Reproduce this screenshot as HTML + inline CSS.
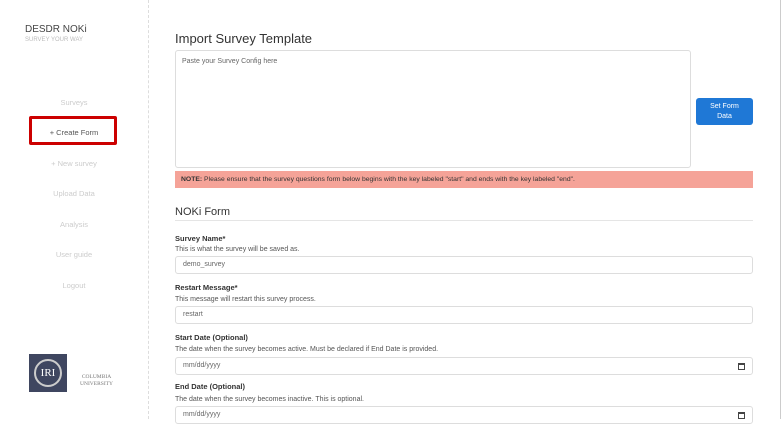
<!DOCTYPE html>
<html><head><style>
body{margin:0;width:782px;height:419px;overflow:hidden;background:#fff;font-family:"Liberation Sans",sans-serif;position:relative}
.a{position:absolute}
.side{left:0;top:0;width:148px;height:419px;border-right:1px dashed #ddd}
.nav{width:148px;text-align:center;font-size:7.5px;color:#ccc}
.lbl{left:175px;font-size:7.5px;font-weight:bold;color:#333}
.hlp{left:175px;font-size:7px;color:#555}
.in{left:175px;width:569px;height:16px;border:1px solid #ddd;border-radius:3px;font-size:7px;color:#666;line-height:16px;padding-left:7px}
.cal{position:absolute;right:7px;top:5px;width:5px;height:4px;border:1px solid #444;border-top-width:2px}
</style></head><body>
<div class="a side"></div>
<div class="a" style="left:25px;top:24px;font-size:10px;color:#444">DESDR NOKi</div>
<div class="a" style="left:25px;top:37px;font-size:6px;color:#bbb">SURVEY YOUR WAY</div>
<div class="a nav" style="top:98px">Surveys</div>
<div class="a" style="left:29px;top:116px;width:88px;height:29px;border:3px solid #c00;border-radius:2px;box-sizing:border-box"></div>
<div class="a nav" style="top:128px;color:#555">+ Create Form</div>
<div class="a nav" style="top:159px">+ New survey</div>
<div class="a nav" style="top:189px">Upload Data</div>
<div class="a nav" style="top:220px">Analysis</div>
<div class="a nav" style="top:250px">User guide</div>
<div class="a nav" style="top:281px">Logout</div>
<div class="a" style="left:29px;top:354px;width:38px;height:38px;background:#3f4660;display:flex;align-items:center;justify-content:center"><div style="width:28px;height:28px;border-radius:50%;border:2px solid #ccc;box-sizing:border-box;color:#fff;font-family:'Liberation Serif',serif;font-size:11px;line-height:24px;text-align:center">IRI</div></div>
<div class="a" style="left:80px;top:374px;font-family:'Liberation Serif',serif;font-size:5.5px;color:#777;text-align:center;line-height:7px">COLUMBIA<br>UNIVERSITY</div>
<div class="a" style="left:780px;top:0;width:1px;height:419px;background:#ccc"></div>
<div class="a" style="left:175px;top:31px;font-size:13px;color:#333">Import Survey Template</div>
<div class="a" style="left:175px;top:50px;border:1px solid #ddd;border-radius:3px;font-size:7px;color:#666;padding:7px 6px;box-sizing:border-box;width:516px;height:118px">Paste your Survey Config here</div>
<div class="a" style="left:696px;top:98px;width:57px;height:27px;background:#1f78d6;border-radius:3px;color:#fff;font-size:7px;text-align:center;line-height:10px;padding-top:4px;box-sizing:border-box">Set Form<br>Data</div>
<div class="a" style="left:175px;top:171px;width:578px;height:17px;background:#f5a398;font-size:6.8px;color:#333;line-height:17px;padding-left:6px;box-sizing:border-box;white-space:nowrap"><b>NOTE:</b> Please ensure that the survey questions form below begins with the key labeled "start" and ends with the key labeled "end".</div>
<div class="a" style="left:175px;top:206px;font-size:11px;color:#333">NOKi Form</div>
<div class="a" style="left:175px;top:220px;width:578px;height:1px;background:#e5e5e5"></div>
<div class="a lbl" style="top:234px">Survey Name*</div>
<div class="a hlp" style="top:246px">This is what the survey will be saved as.</div>
<div class="a in" style="top:256px">demo_survey</div>
<div class="a lbl" style="top:283px">Restart Message*</div>
<div class="a hlp" style="top:296px">This message will restart this survey process.</div>
<div class="a in" style="top:306px">restart</div>
<div class="a lbl" style="top:333px">Start Date (Optional)</div>
<div class="a hlp" style="top:346px">The date when the survey becomes active. Must be declared if End Date is provided.</div>
<div class="a in" style="top:357px">mm/dd/yyyy<span class="cal"></span></div>
<div class="a lbl" style="top:382px">End Date (Optional)</div>
<div class="a hlp" style="top:396px">The date when the survey becomes inactive. This is optional.</div>
<div class="a in" style="top:406px">mm/dd/yyyy<span class="cal"></span></div>
</body></html>
